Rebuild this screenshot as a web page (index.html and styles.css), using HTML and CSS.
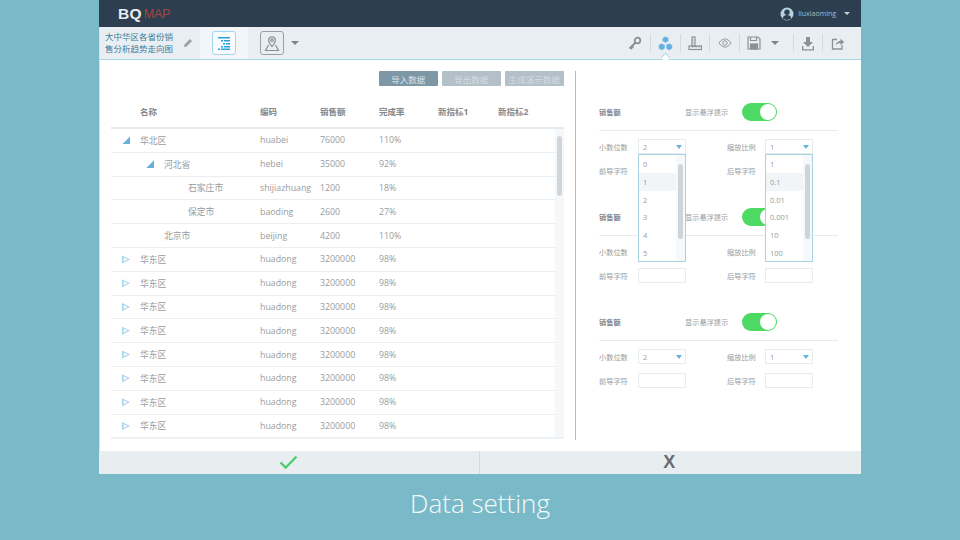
FILE: index.html
```html
<!DOCTYPE html>
<html lang="en">
<head>
    <meta charset="UTF-8">
    <title>BQ Map - Data setting</title>
    <link rel="stylesheet" href="styles.css">
</head>
<body>
    <div class="window">
        <header class="topbar">
            <div class="logo"><b>BQ</b><span>MAP</span></div>
            <div class="user">
                <svg width="14" height="14" viewBox="0 0 14 14"><circle cx="7" cy="7" r="6.5" fill="#b9d2e2"/><circle cx="7" cy="5.2" r="2.7" fill="#2c3e50"/><path d="M2.6 11.6c.6-2.600 2.400-3.500 4.400-3.500s3.800.9 4.400 3.500c-2.400 1.800-6.400 1.800-8.800 0z" fill="#2c3e50"/></svg>
                <span>liuxiaoming</span>
                <i class="caret-small"></i>
            </div>
        </header>

        <div class="toolbar">
            <div class="doc-title">
                <p>大中华区各省份销<br>售分析趋势走向图</p>
                <svg width="10" height="10" viewBox="0 0 10 10"><path d="M1 9l.6-2.600L7 1l2 2-5.400 5.400z" fill="#9a9fa3"/></svg>
            </div>
            <div class="mode-tab">
                <span class="btn-icon active">
                    <svg width="13" height="13" viewBox="0 0 13 13" fill="#2b9fdc"><rect x="0" y="0" width="12" height="1.500"/><rect x="3" y="3" width="2" height="1.500"/><rect x="6" y="3" width="6" height="1.500"/><rect x="5" y="6" width="2" height="1.500"/><rect x="8" y="6" width="4" height="1.500"/><rect x="3" y="9" width="2" height="1.500"/><rect x="6" y="9" width="6" height="1.500"/><rect x="0" y="11.500" width="2" height="1.500"/><rect x="3" y="11.500" width="9" height="1.500"/></svg>
                </span>
            </div>
            <div class="map-tab">
                <span class="btn-icon">
                    <svg width="16" height="17" viewBox="0 0 16 17" fill="none" stroke="#8a9195" stroke-width="1.200"><path d="M8 11.500C6 9 4.600 7.400 4.600 5.200a3.400 3.400 0 0 1 6.800 0C11.400 7.400 10 9 8 11.500z"/><circle cx="8" cy="5.200" r="1.300"/><path d="M4.500 10L1.500 15.500h13L11.500 10"/></svg>
                </span>
                <i class="caret"></i>
            </div>
            <div class="tools">
                <div class="tool">
                    <svg width="14" height="14" viewBox="0 0 14 14" fill="none" stroke="#8a9195" stroke-width="1.800"><circle cx="9.500" cy="4.500" r="2.800"/><path d="M7.500 6.500L1.500 12.500M2.500 11.500l1.500 1.500M4 10l1.500 1.500"/></svg>
                </div>
                <div class="tool selected">
                    <svg width="15" height="15" viewBox="0 0 15 15" fill="#62b1e2" stroke="#e8eef1" stroke-width=".6"><path d="M7.500 0.300l3.200 1.600v3.400L7.500 6.900 4.300 5.300V1.900z"/><path d="M3.800 7.200l3.200 1.600v3.800l-3.200 1.800L.6 12.600V8.800z"/><path d="M11.200 7.200l3.200 1.600v3.800l-3.200 1.800L8 12.600V8.800z"/></svg>
                </div>
                <div class="tool">
                    <svg width="14" height="15" viewBox="0 0 14 15" fill="none" stroke="#8a9195" stroke-width="1.200"><rect x="4" y="1" width="3" height="9"/><rect x="1" y="10" width="12.500" height="3.500"/><path d="M4 4h1.500M4 7h1.500M4.500 10v1.500M8 10v1.500M11 10v1.500"/></svg>
                </div>
                <div class="tool">
                    <svg width="14" height="10" viewBox="0 0 14 10" fill="none" stroke="#9299a0" stroke-width="1"><path d="M1 5c2-3 4-4 6-4s4 1 6 4c-2 3-4 4-6 4s-4-1-6-4z"/><circle cx="7" cy="5" r="2.200"/></svg>
                </div>
                <div class="tool wide">
                    <svg width="14" height="14" viewBox="0 0 14 14" fill="none" stroke="#8a9195" stroke-width="1.200"><path d="M1 1h10l2 2v10H1z"/><path d="M3.500 1v3.500h6V1"/><rect x="3.500" y="8" width="7" height="5" fill="#8a9195"/></svg>
                    <i class="caret"></i>
                </div>
                <div class="tool">
                    <svg width="14" height="15" viewBox="0 0 14 15" fill="#8a9195"><path d="M5 1h4v5h3L7 11 2 6h3z"/><path d="M1 10h1.300v3.200h9.400V10H13v4.500H1z"/></svg>
                </div>
                <div class="tool">
                    <svg width="14" height="13" viewBox="0 0 14 13" fill="none" stroke="#8a9195" stroke-width="1.300"><path d="M6 2.500H1.500v9.500h9.500V8"/><path d="M4.500 8.500c.5-3 2.500-4.500 5-4.500V1.800L13.200 5 9.500 8.200V6c-2 0-3.800.8-5 2.500z" fill="#8a9195" stroke="none"/></svg>
                </div>
            </div>
        </div>

        <main class="content">
            <section class="data-area">
                <div class="data-actions">
                    <button class="data-btn primary">导入数据</button>
                    <button class="data-btn">导出数据</button>
                    <button class="data-btn">生成演示数据</button>
                </div>
                <div class="data-head">
                    <span class="col-name">名称</span><span>编码</span><span>销售额</span><span>完成率</span><span>新指标1</span><span>新指标2</span>
                </div>
                <div class="data-body">
                    <div class="data-rows">
                        <div class="data-row"><span class="col-name"><i class="arrow open"></i>华北区</span><span>huabei</span><span>76000</span><span>110%</span></div>
                        <div class="data-row level1"><span class="col-name"><i class="arrow open"></i>河北省</span><span>hebei</span><span>35000</span><span>92%</span></div>
                        <div class="data-row level2"><span class="col-name"><i class="arrow none"></i>石家庄市</span><span>shijiazhuang</span><span>1200</span><span>18%</span></div>
                        <div class="data-row level2"><span class="col-name"><i class="arrow none"></i>保定市</span><span>baoding</span><span>2600</span><span>27%</span></div>
                        <div class="data-row level1"><span class="col-name"><i class="arrow none"></i>北京市</span><span>beijing</span><span>4200</span><span>110%</span></div>
                        <div class="data-row"><span class="col-name"><i class="arrow"></i>华东区</span><span>huadong</span><span>3200000</span><span>98%</span></div>
                        <div class="data-row"><span class="col-name"><i class="arrow"></i>华东区</span><span>huadong</span><span>3200000</span><span>98%</span></div>
                        <div class="data-row"><span class="col-name"><i class="arrow"></i>华东区</span><span>huadong</span><span>3200000</span><span>98%</span></div>
                        <div class="data-row"><span class="col-name"><i class="arrow"></i>华东区</span><span>huadong</span><span>3200000</span><span>98%</span></div>
                        <div class="data-row"><span class="col-name"><i class="arrow"></i>华东区</span><span>huadong</span><span>3200000</span><span>98%</span></div>
                        <div class="data-row"><span class="col-name"><i class="arrow"></i>华东区</span><span>huadong</span><span>3200000</span><span>98%</span></div>
                        <div class="data-row"><span class="col-name"><i class="arrow"></i>华东区</span><span>huadong</span><span>3200000</span><span>98%</span></div>
                        <div class="data-row"><span class="col-name"><i class="arrow"></i>华东区</span><span>huadong</span><span>3200000</span><span>98%</span></div>
                    </div>
                    <div class="scroll-track"><div class="scroll-thumb"></div></div>
                </div>
            </section>

            <aside class="settings">
                <div class="setting">
                    <div class="setting-head"><b>销售额</b><span>显示悬浮提示</span><i class="toggle"></i></div>
                    <div class="setting-fields">
                        <label>小数位数</label>
                        <div class="select">2<i class="caret-blue"></i>
                            <div class="dropdown">
                                <ul><li>0</li><li class="hover">1</li><li>2</li><li>3</li><li>4</li><li>5</li></ul>
                                <div class="drop-track"><div class="drop-thumb"></div></div>
                            </div>
                        </div>
                        <label>缩放比例</label>
                        <div class="select">1<i class="caret-blue"></i>
                            <div class="dropdown">
                                <ul><li>1</li><li class="hover">0.1</li><li>0.01</li><li>0.001</li><li>10</li><li>100</li></ul>
                                <div class="drop-track"><div class="drop-thumb"></div></div>
                            </div>
                        </div>
                        <label>前导字符</label><div class="input"></div>
                        <label>后导字符</label><div class="input"></div>
                    </div>
                </div>
                <div class="setting">
                    <div class="setting-head"><b>销售额</b><span>显示悬浮提示</span><i class="toggle"></i></div>
                    <div class="setting-fields">
                        <label>小数位数</label><div class="select">2<i class="caret-blue"></i></div>
                        <label>缩放比例</label><div class="select">1<i class="caret-blue"></i></div>
                        <label>前导字符</label><div class="input"></div>
                        <label>后导字符</label><div class="input"></div>
                    </div>
                </div>
                <div class="setting">
                    <div class="setting-head"><b>销售额</b><span>显示悬浮提示</span><i class="toggle"></i></div>
                    <div class="setting-fields">
                        <label>小数位数</label><div class="select">2<i class="caret-blue"></i></div>
                        <label>缩放比例</label><div class="select">1<i class="caret-blue"></i></div>
                        <label>前导字符</label><div class="input"></div>
                        <label>后导字符</label><div class="input"></div>
                    </div>
                </div>
            </aside>
        </main>

        <footer class="confirm-bar">
            <button class="confirm-btn">
                <svg width="19" height="15" viewBox="0 0 20 16" fill="none" stroke="#4ccb6c" stroke-width="2.400"><path d="M1.500 8l5.500 5.500L18.500 1.500"/></svg>
            </button>
            <button class="confirm-btn cancel">X</button>
        </footer>
    </div>
    <div class="caption">Data setting</div>
</body>
</html>
```

FILE: styles.css
```css
* {
    box-sizing: border-box;
}
body {
    margin: 0;
    width: 960px;
    height: 540px;
    overflow: hidden;
    background-color: #7abac8;
    font-family: "Open Sans", "Noto Sans CJK SC", sans-serif;
    color: #979ca0;
}
i {
    display: block;
}
.window {
    width: 762px;
    height: 474px;
    margin-left: 99px;
    background: #fff;
    display: flex;
    flex-direction: column;
    border-left: 1px solid #c2e8f4;
}
.topbar {
    height: 27px;
    margin-left: -1px;
    background-color: #2c3e50;
    display: flex;
    justify-content: space-between;
    align-items: center;
    padding: 0 11px 0 19px;
}
.logo {
    display: flex;
    align-items: center;
    gap: 2px;
    font-family: "Liberation Sans", sans-serif;
}
.logo b {
    color: #e9edef;
    font-size: 15.5px;
    letter-spacing: 0.3px;
}
.logo span {
    color: #a8453f;
    font-size: 12.5px;
    letter-spacing: -0.3px;
}
.user {
    display: flex;
    align-items: center;
    gap: 4px;
    font-size: 7px;
    color: #aebbc5;
}
.caret-small {
    width: 0;
    height: 0;
    margin-left: 4px;
    border: 3px solid transparent;
    border-top: 3px solid #c5ced5;
    border-bottom: 0;
}
.toolbar {
    height: 33px;
    background-color: #e8eef1;
    border-bottom: 1px solid #a9d6e4;
    display: flex;
    align-items: center;
}
.doc-title {
    width: 100px;
    height: 100%;
    padding-left: 5px;
    display: flex;
    align-items: center;
    gap: 5px;
}
.doc-title p {
    margin: 0;
    width: 73px;
    flex-shrink: 0;
    font-size: 8.5px;
    line-height: 12px;
    color: #3e7ba0;
}
.mode-tab {
    width: 48px;
    height: 100%;
    background-color: #f2f6f8;
    display: flex;
    align-items: center;
    justify-content: center;
}
.map-tab {
    display: flex;
    align-items: center;
    gap: 7px;
    margin-left: 12px;
}
.btn-icon {
    width: 24px;
    height: 24px;
    border: 1px solid #9a9fa2;
    border-radius: 3px;
    display: flex;
    align-items: center;
    justify-content: center;
}
.btn-icon.active {
    border-color: #a3d6ec;
    background-color: #f8fcfe;
}
.caret {
    width: 0;
    height: 0;
    border-left: 4px solid transparent;
    border-right: 4px solid transparent;
    border-top: 4px solid #7d8589;
}
.tools {
    margin-left: auto;
    padding-right: 9px;
    display: flex;
    align-items: center;
}
.tool {
    position: relative;
    width: 29.600px;
    height: 18px;
    display: flex;
    align-items: center;
    justify-content: center;
}
.tool + .tool {
    border-left: 1px solid #d3dbdf;
}
.tool.wide {
    width: 54px;
    justify-content: flex-start;
    gap: 10px;
    padding-left: 7px;
}
.tool.selected::after {
    content: "";
    position: absolute;
    left: 50%;
    bottom: -9px;
    width: 6px;
    height: 6px;
    margin-left: -3px;
    background: #fff;
    border-top: 1px solid #a9d6e4;
    border-left: 1px solid #a9d6e4;
    transform: rotate(45deg);
}
.content {
    flex: 1;
    display: flex;
    min-height: 0;
}
.data-area {
    width: 453px;
    margin-left: 11px;
    padding-top: 11px;
}
.data-actions {
    display: flex;
    justify-content: flex-end;
    gap: 3.500px;
}
.data-btn {
    width: 59.500px;
    height: 15px;
    padding: 0;
    border: none;
    border-radius: 1px;
    background-color: #b3c0c8;
    color: #d5dde2;
    font-family: inherit;
    font-size: 8.5px;
}
.data-btn.primary {
    background-color: #7e97a7;
    color: #dbe4e9;
}
.data-head,
.data-row {
    display: grid;
    grid-template-columns: 149px 60px 59px 59px 60px 1fr;
    align-items: center;
}
.data-head {
    height: 43px;
    padding-top: 10px;
    padding-bottom: 1px;
    border-bottom: 2px solid #e4ebef;
    font-size: 8.5px;
    font-weight: 700;
    color: #83888c;
}
.col-name {
    display: flex;
    align-items: center;
    padding-left: 29px;
}
.data-body {
    display: flex;
    height: 310px;
    border-bottom: 2px solid #eef2f5;
}
.data-rows {
    flex: 1;
}
.data-row {
    height: 23.800px;
    border-bottom: 1px solid #e9eef2;
    font-size: 8.8px;
}
.data-row .col-name {
    padding-left: 11px;
}
.data-row.level1 .col-name {
    padding-left: 35px;
}
.data-row.level2 .col-name {
    padding-left: 59px;
}
.arrow {
    width: 8px;
    height: 8px;
    margin-right: 10px;
    background-color: #a5d3ec;
    clip-path: polygon(0 0, 100% 50%, 0 100%, 0 0, 20% 25%, 20% 75%, 72% 50%, 20% 25%);
}
.arrow.open {
    background-color: #68b1dc;
    clip-path: polygon(100% 0, 100% 100%, 0 100%);
}
.arrow.none {
    visibility: hidden;
}
.scroll-track {
    width: 9px;
    padding: 7px 2px 0;
    background-color: #f5f8fb;
}
.scroll-thumb {
    height: 60px;
    border-radius: 3px;
    background-color: #d0d6da;
}
.settings {
    width: 286px;
    height: 369px;
    margin: 11px 0 0 11px;
    padding: 32px 0 0 23px;
    border-left: 1px solid #8ec6d8;
}
.setting {
    height: 105px;
    width: 239px;
}
.setting-head {
    height: 18px;
    padding-bottom: 9px;
    border-bottom: 1px solid #e7ecef;
    display: flex;
    align-items: center;
    box-sizing: content-box;
    font-size: 7.2px;
}
.setting-head b {
    width: 86px;
    color: #83888c;
}
.setting-head span {
    width: 57px;
}
.toggle {
    position: relative;
    width: 35px;
    height: 18px;
    border-radius: 9px;
    background-color: #4cd964;
}
.toggle::after {
    content: "";
    position: absolute;
    right: 1px;
    top: 1px;
    width: 16px;
    height: 16px;
    border-radius: 50%;
    background: #fff;
}
.setting-fields {
    margin-top: 8px;
    display: grid;
    grid-template-columns: 39px 48px 41px 38px 48px;
    grid-auto-rows: 15px;
    row-gap: 9px;
    align-items: center;
    font-size: 7.2px;
}
.setting-fields label:nth-of-type(even) {
    grid-column: 4;
}
.select,
.input {
    position: relative;
    height: 15px;
    border: 1px solid #e7ecef;
    background: #fff;
}
.select {
    padding-left: 4px;
    display: flex;
    align-items: center;
    font-size: 7.5px;
}
.caret-blue {
    position: absolute;
    right: 3px;
    top: 5px;
    width: 0;
    height: 0;
    border-left: 3.500px solid transparent;
    border-right: 3.500px solid transparent;
    border-top: 4px solid #68b1dc;
}
.dropdown {
    position: absolute;
    left: -1px;
    top: 14px;
    z-index: 2;
    width: 48px;
    height: 108px;
    border: 1px solid #a7d2e2;
    background: #fff;
    display: flex;
}
.dropdown ul {
    flex: 1;
    margin: 0;
    padding: 0;
    list-style: none;
}
.dropdown li {
    height: 17.800px;
    padding-left: 4px;
    line-height: 18px;
    font-size: 7.5px;
}
.dropdown li.hover {
    background-color: #f1f5f7;
}
.drop-track {
    width: 9px;
    padding: 9px 2px 0;
    background-color: #f5f9fc;
}
.drop-thumb {
    height: 75px;
    border-radius: 3px;
    background-color: #ced4d8;
}
.confirm-bar {
    height: 23px;
    margin-left: -1px;
    display: flex;
    background-color: #e8edf0;
}
.confirm-btn {
    flex: 1;
    padding: 0;
    border: none;
    background: none;
    display: flex;
    align-items: center;
    justify-content: center;
}
.confirm-btn.cancel {
    padding-right: 2px;
    border-left: 1px solid #d4dbdf;
    color: #666b6f;
    font-family: "Liberation Sans", sans-serif;
    font-size: 18px;
    font-weight: 700;
}
.caption {
    padding-top: 12px;
    text-align: center;
    font-family: "Open Sans", sans-serif;
    font-size: 26px;
    font-weight: 300;
    line-height: 34px;
    color: #f4fafb;
}
```
